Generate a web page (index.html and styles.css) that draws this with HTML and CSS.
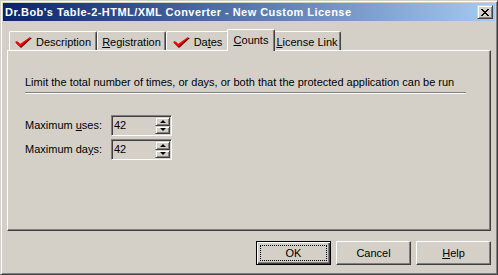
FILE: index.html
```html
<!DOCTYPE html>
<html>
<head>
    <title>New Custom License</title>
    <link rel="stylesheet" href="styles.css">
</head>
<body>
    <div class="window">
        <div class="caption">
            <span class="caption-title">Dr.Bob's Table-2-HTML/XML Converter - New Custom License</span>
            <span class="caption-close">
                <svg width="8" height="7" viewBox="0 0 8 7" shape-rendering="crispEdges">
                    <path d="M0 0h2v1h-2z M6 0h2v1h-2z M1 1h2v1h-2z M5 1h2v1h-2z M2 2h4v1h-4z M3 3h2v1h-2z M2 4h4v1h-4z M1 5h2v1h-2z M5 5h2v1h-2z M0 6h2v1h-2z M6 6h2v1h-2z" fill="#000"/>
                </svg>
            </span>
        </div>
        <div class="client">
            <div class="tabs">
                <div class="tab tab-description">
                    <svg class="check" width="17" height="11" viewBox="0 0 17 11">
                        <polygon points="1,6 3,5 6,8 15,1 17,1 6,11" fill="#600"/>
                        <polygon points="0,5 2,4 5,7 15,0 16,0 5,10" fill="#f00"/>
                    </svg>
                    <span>Description</span>
                </div>
                <div class="tab tab-registration"><span><u>R</u>egistration</span></div>
                <div class="tab tab-dates">
                    <svg class="check" width="17" height="11" viewBox="0 0 17 11">
                        <polygon points="1,6 3,5 6,8 15,1 17,1 6,11" fill="#600"/>
                        <polygon points="0,5 2,4 5,7 15,0 16,0 5,10" fill="#f00"/>
                    </svg>
                    <span>Da<u>t</u>es</span>
                </div>
                <div class="tab tab-counts active"><span><u>C</u>ounts</span></div>
                <div class="tab tab-license"><span><u>L</u>icense Link</span></div>
            </div>
            <div class="panel">
                <p class="intro">Limit the total number of times, or days, or both that the protected application can be run</p>
                <div class="groove"></div>
                <div class="field">
                    <label>Maximum <u>u</u>ses:</label>
                    <div class="spin">
                        <span class="spin-value">42</span>
                        <div class="spin-buttons">
                            <span class="spin-btn"><span class="arrow-up"></span></span>
                            <span class="spin-btn"><span class="arrow-down"></span></span>
                        </div>
                    </div>
                </div>
                <div class="field">
                    <label>Maximum da<u>y</u>s:</label>
                    <div class="spin">
                        <span class="spin-value">42</span>
                        <div class="spin-buttons">
                            <span class="spin-btn"><span class="arrow-up"></span></span>
                            <span class="spin-btn"><span class="arrow-down"></span></span>
                        </div>
                    </div>
                </div>
            </div>
            <div class="buttons">
                <button class="btn btn-default">OK</button>
                <button class="btn">Cancel</button>
                <button class="btn"><u>H</u>elp</button>
            </div>
        </div>
    </div>
</body>
</html>
```
FILE: styles.css
```css
body {
    margin: 0;
    font-family: "Liberation Sans", Arial, sans-serif;
    font-size: 11px;
    line-height: 13px;
    color: #000;
    background-color: #d4d0c8;
}
.window {
    width: 498px;
    height: 275px;
    box-sizing: border-box;
    padding: 2px;
    background-color: #d4d0c8;
    border: 1px solid;
    border-color: #d4d0c8 #404040 #404040 #d4d0c8;
    box-shadow: inset 1px 1px #fff, inset -1px -1px #808080;
}
.caption {
    height: 18px;
    display: flex;
    align-items: center;
    justify-content: space-between;
    padding: 0 2px;
    background: linear-gradient(to right, #0a246a, #a6caf0);
}
.caption-title {
    color: #fff;
    font-weight: bold;
    letter-spacing: 0.45px;
    padding-top: 1px;
}
.caption-close {
    width: 16px;
    height: 14px;
    box-sizing: border-box;
    display: flex;
    align-items: center;
    justify-content: center;
    background-color: #d4d0c8;
    border: 1px solid;
    border-color: #d4d0c8 #404040 #404040 #d4d0c8;
    box-shadow: inset 1px 1px #fff, inset -1px -1px #808080;
}
.client {
    padding: 8px 4px 0 4px;
}
.tabs {
    display: flex;
    align-items: flex-end;
    height: 21px;
    padding-left: 2px;
    position: relative;
    z-index: 1;
}
.tab {
    height: 19px;
    box-sizing: border-box;
    display: flex;
    justify-content: center;
    align-items: flex-start;
    padding-top: 4px;
    background-color: #d4d0c8;
    border: 1px solid;
    border-bottom: none;
    border-color: #fff #404040 #fff #fff;
    border-radius: 2px 2px 0 0;
    box-shadow: inset -1px 0 #808080;
}
.tab .check {
    margin-top: 1px;
    margin-right: 4px;
}
.tab-description { width: 88px; }
.tab-registration { width: 69px; }
.tab-dates { width: 63px; }
.tab-counts { width: 48px; }
.tab-license { width: 68px; }
.tab.active {
    height: 22px;
    margin: 0 -2px -1px -2px;
    position: relative;
    z-index: 2;
}
.panel {
    height: 181px;
    box-sizing: border-box;
    padding: 25px 0 0 17px;
    border: 1px solid;
    border-color: #fff #404040 #404040 #fff;
    box-shadow: inset -1px -1px #808080;
}
.intro {
    margin: 0;
}
.groove {
    width: 441px;
    margin-top: 3px;
    border-top: 1px solid #808080;
    border-bottom: 1px solid #fff;
}
.field {
    display: flex;
    align-items: center;
    height: 21px;
    margin-top: 3px;
}
.groove + .field {
    margin-top: 21px;
}
.field label {
    width: 86px;
}
.spin {
    width: 61px;
    height: 21px;
    box-sizing: border-box;
    display: flex;
    justify-content: space-between;
    padding: 1px;
    border: 1px solid;
    border-color: #808080 #fff #fff #808080;
    box-shadow: inset 1px 1px #404040, inset -1px -1px #d4d0c8;
}
.spin-value {
    padding: 2px 0 0 1px;
}
.spin-buttons {
    width: 15px;
    display: flex;
    flex-direction: column;
}
.spin-btn {
    flex: 1;
    display: flex;
    align-items: center;
    justify-content: center;
    border: 1px solid;
    border-color: #d4d0c8 #404040 #404040 #d4d0c8;
    box-shadow: inset 1px 1px #fff, inset -1px -1px #808080;
}
.arrow-up {
    width: 0;
    height: 0;
    border-left: 3px solid transparent;
    border-right: 3px solid transparent;
    border-bottom: 3px solid #000;
}
.arrow-down {
    width: 0;
    height: 0;
    border-left: 3px solid transparent;
    border-right: 3px solid transparent;
    border-top: 3px solid #000;
}
.buttons {
    display: flex;
    justify-content: flex-end;
    gap: 5px;
    margin-top: 10px;
}
.btn {
    width: 75px;
    height: 24px;
    padding: 0;
    font-family: inherit;
    font-size: 11px;
    color: #000;
    background-color: #d4d0c8;
    border: 1px solid;
    border-color: #fff #404040 #404040 #fff;
    box-shadow: inset -1px -1px #808080;
    position: relative;
}
.btn-default {
    border: 1px solid #000;
    box-shadow: inset 1px 1px #fff, inset -1px -1px #404040, inset -2px -2px #808080;
}
.btn-default::after {
    content: "";
    position: absolute;
    top: 3px;
    left: 3px;
    right: 3px;
    bottom: 3px;
    border: 1px dotted #000;
}
```
